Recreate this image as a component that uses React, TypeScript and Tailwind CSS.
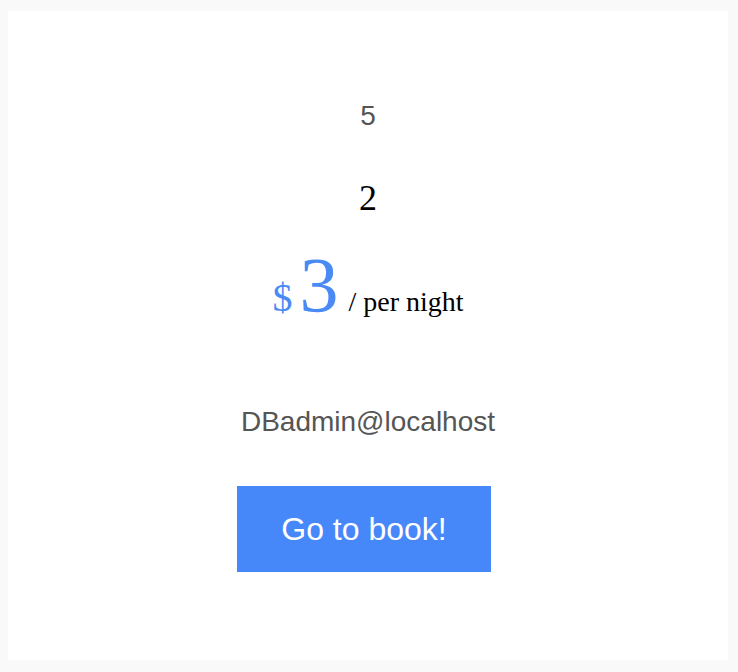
export default function App() {
  return (
    <div className="h-[672px] bg-[#f9f9f9] pt-[11px] pl-2 pr-[10px] pb-[12px]">
      <div className="h-[649px] bg-white pt-[91px] flex flex-col items-center text-center">
        <p className="font-['Liberation_Sans',Arial,sans-serif] text-[28px] leading-none text-[#555]">5</p>

        <p className="mt-[50px] font-['Liberation_Serif','Times_New_Roman',serif] text-[36px] leading-none text-black">2</p>

        <div className="mt-[30px] flex items-baseline font-['Liberation_Serif','Times_New_Roman',serif] leading-none">
          <span className="text-[40px] text-[#4a8af4]">$</span>
          <span className="ml-[7px] text-[78px] text-[#4a8af4]">3</span>
          <span className="ml-[10px] text-[28px] text-black">/ per night</span>
        </div>

        <p className="mt-[84px] font-['Liberation_Sans',Arial,sans-serif] text-[28px] leading-none text-[#555]">
          DBadmin@localhost
        </p>

        <button className="mt-[50px] mr-2 w-[254px] h-[86px] bg-[#4688fa] text-white font-['Liberation_Sans',Arial,sans-serif] text-[32px] leading-none">
          Go to book!
        </button>
      </div>
    </div>
  );
}
